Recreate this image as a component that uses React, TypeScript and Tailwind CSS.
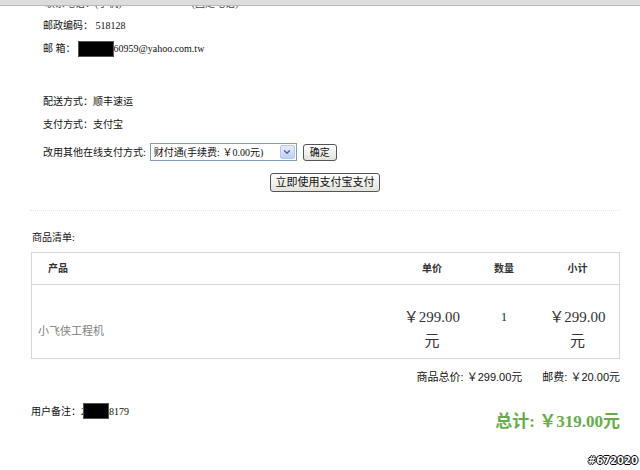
import { ChevronDown } from 'lucide-react';

const cjk = "font-['Liberation_Serif','Noto_Sans_CJK_SC',serif]";

export default function App() {
  return (
    <div className={`relative w-[640px] h-[470px] overflow-hidden bg-white text-[10px] text-[#111] ${cjk}`}>
      {/* top browser strip, cut off */}
      <div className="h-[6px] bg-[#dcdcdc] border-b border-[#b9b9b9]" />
      <div className="h-[4px] overflow-hidden pl-[45px] text-[#444]">
        <div className="-mt-[8px] flex gap-[70px] leading-[12px]">
          <span>联系电话：(手机)</span>
          <span>(固定电话)</span>
        </div>
      </div>

      <div className="pl-[43px] pt-[4px]">
        <div className="h-[23px] leading-[23px]">邮政编码： 518128</div>
        <div className="h-[23px] flex items-center">
          <span>邮 箱：</span>
          <span className="ml-[2px] w-[36px] h-[16px] bg-black border border-[#555]" />
          <span>60959@yahoo.com.tw</span>
        </div>
        <div className="h-[30px]" />
        <div className="h-[23px] leading-[23px]">配送方式：顺丰速运</div>
        <div className="h-[23px] leading-[23px]">支付方式：支付宝</div>

        <div className="mt-[6px] h-[20px] flex items-center">
          <span>改用其他在线支付方式:</span>
          <div className="ml-[4px] w-[147px] h-[18px] flex items-center border border-[#7f9db9] bg-white">
            <span className="flex-1 pl-[3px] whitespace-nowrap">财付通(手续费: ￥0.00元)</span>
            <span className="w-[15px] h-[14px] mr-[1px] flex items-center justify-center rounded-[2px] bg-gradient-to-b from-[#e6eefc] to-[#bcd0f4] border border-[#b5c8ef]">
              <ChevronDown className="w-[10px] h-[10px] text-[#4d6185]" strokeWidth={3} />
            </span>
          </div>
          <button className="ml-[6px] h-[17px] px-[6px] leading-[15px] rounded-[3px] border border-[#555] bg-gradient-to-b from-[#fefefe] to-[#e3e3dc]">
            确定
          </button>
        </div>
      </div>

      <div className="mt-[11px] pl-[10px] flex justify-center">
        <button className="w-[110px] h-[19px] leading-[17px] rounded-[3px] border border-[#555] bg-gradient-to-b from-[#fefefe] to-[#e3e3dc] text-[11px]">
          立即使用支付宝支付
        </button>
      </div>

      <div className="mt-[18px] ml-[30px] w-[590px] border-t border-dotted border-[#e2e2e2]" />

      <div className="mt-[20px] ml-[32px] h-[14px] leading-[14px]">商品清单:</div>

      <div className="mt-[7px] ml-[31px] w-[589px] border border-[#d6d6d6]">
        <div className="h-[32px] grid grid-cols-[1fr_80px_64px_83px] items-center border-b border-[#d6d6d6] font-bold text-[#333]">
          <div className="pl-[16px]">产品</div>
          <div className="text-center">单价</div>
          <div className="text-center">数量</div>
          <div className="text-center">小计</div>
        </div>
        <div className="h-[73px] pt-[20px] grid grid-cols-[1fr_80px_64px_83px] items-start">
          <div className="self-center pl-[6px] text-[11px] text-[#808080]">小飞侠工程机</div>
          <div className="text-center text-[15px] leading-[24px] text-[#333]">
            <div>￥299.00</div>
            <div>元</div>
          </div>
          <div className="text-center text-[13px] leading-[24px] text-[#333]">1</div>
          <div className="text-center text-[15px] leading-[24px] text-[#333]">
            <div>￥299.00</div>
            <div>元</div>
          </div>
        </div>
      </div>

      <div className="mt-[11px] pr-[20px] h-[14px] leading-[14px] flex justify-end gap-[20px] text-[11px] font-['Liberation_Sans','Noto_Sans_CJK_SC',sans-serif]">
        <span>商品总价: ￥299.00元</span>
        <span>邮费: ￥20.00元</span>
      </div>

      <div className="mt-[20px] pl-[31px] pr-[20px] flex justify-between items-start">
        <div className="h-[14px] flex items-center">
          <span>用户备注：2</span>
          <span className="-ml-[3px] w-[26px] h-[16px] bg-black border border-[#555]" />
          <span>8179</span>
        </div>
        <div className="mt-[6px] h-[24px] leading-[24px] text-[17px] font-bold text-[#66ad4a]">
          总计: ￥319.00元
        </div>
      </div>

      <div className="absolute right-[2px] bottom-[2px] text-[10px] font-bold text-white font-['DejaVu_Sans',sans-serif] [text-shadow:-1px_0_#000,1px_0_#000,0_-1px_#000,0_1px_#000]">
        #672020
      </div>
    </div>
  );
}
